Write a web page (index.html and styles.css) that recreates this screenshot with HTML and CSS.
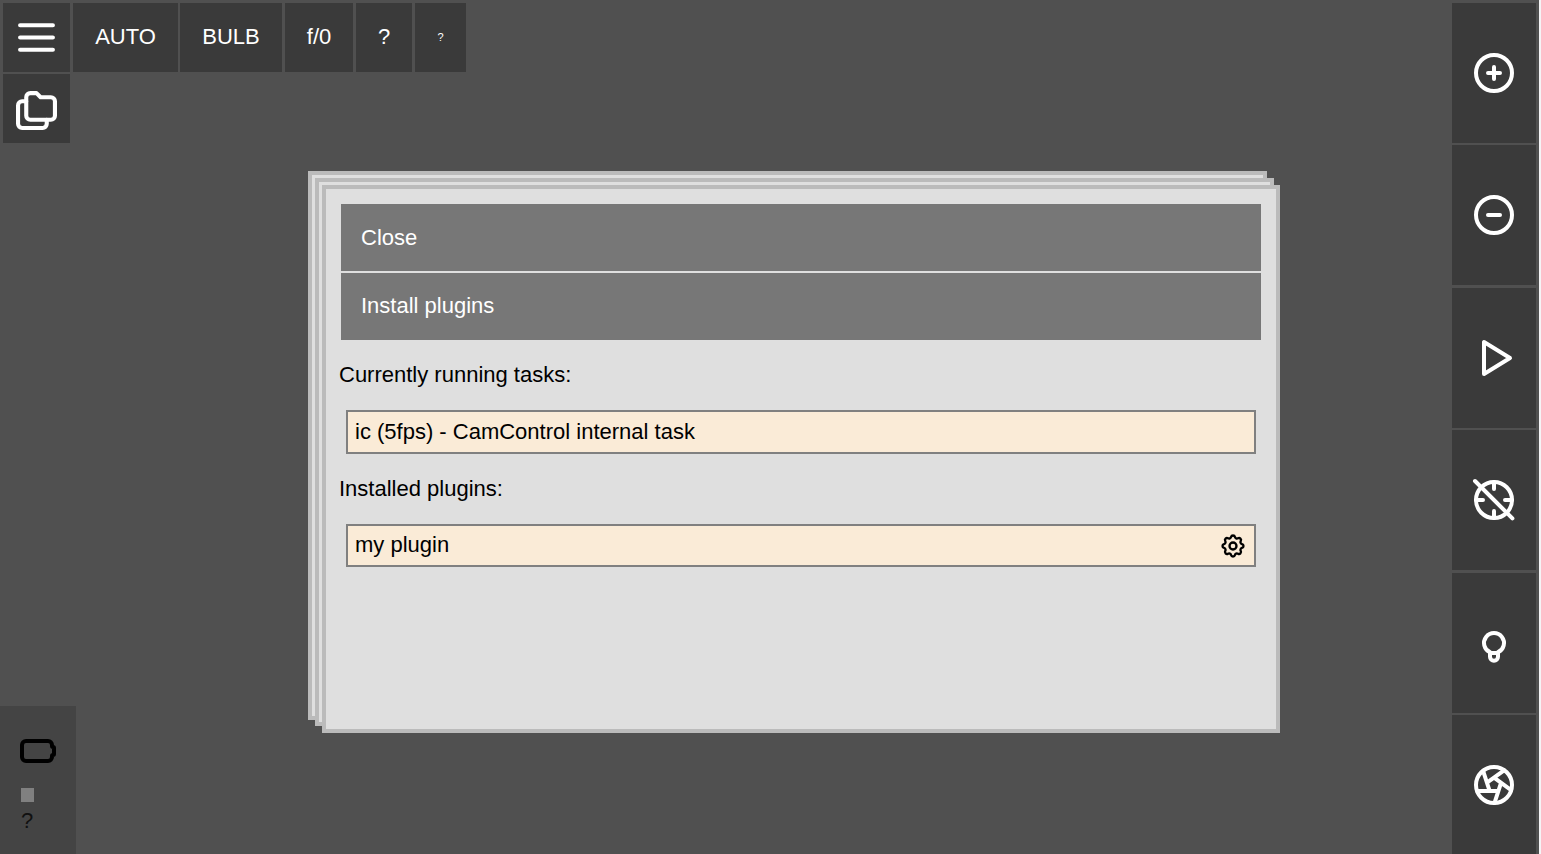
FILE: index.html
```html
<!DOCTYPE html>
<html lang="en">
<head>
  <meta charset="UTF-8">
  <title>CamControl</title>
  <link rel="stylesheet" href="styles.css">
</head>
<body>
  <div class="main">
    <div class="toolbar">
      <button class="tool-btn menu-btn">
        <svg class="icon burger" viewBox="2 2 20 20"><path d="M4 6h16M4 12h16M4 18h16"/></svg>
      </button>
      <button class="tool-btn auto-btn">AUTO</button>
      <button class="tool-btn bulb-btn">BULB</button>
      <button class="tool-btn fnum-btn">f/0</button>
      <button class="tool-btn iso-btn">?</button>
      <button class="tool-btn small-btn">?</button>
    </div>
    <button class="tool-btn menu-btn folder-btn">
      <svg class="icon folders" viewBox="2 2 20 20">
        <path d="M9 4h3l2 2h5a2 2 0 0 1 2 2v7a2 2 0 0 1-2 2H9a2 2 0 0 1-2-2V6a2 2 0 0 1 2-2"/>
        <path d="M17 17v2a2 2 0 0 1-2 2H5a2 2 0 0 1-2-2v-9a2 2 0 0 1 2-2h2"/>
      </svg>
    </button>

    <div class="status">
      <svg class="battery" viewBox="3 6 18 12"><path d="M6 7h11a2 2 0 0 1 2 2v.5a.5 .5 0 0 0 .5 .5a.5 .5 0 0 1 .5 .5v3a.5 .5 0 0 1-.5 .5a.5 .5 0 0 0-.5 .5v.5a2 2 0 0 1-2 2H6a2 2 0 0 1-2-2V9a2 2 0 0 1 2-2"/></svg>
      <div class="led"></div>
      <div class="status-text">?</div>
    </div>
  </div>

  <div class="side">
    <button class="side-btn">
      <svg class="icon" viewBox="2 2 20 20"><circle cx="12" cy="12" r="9"/><path d="M9 12h6M12 9v6"/></svg>
    </button>
    <button class="side-btn">
      <svg class="icon" viewBox="2 2 20 20"><circle cx="12" cy="12" r="9"/><path d="M9 12h6"/></svg>
    </button>
    <button class="side-btn">
      <svg class="icon" viewBox="2 2 20 20"><path d="M7 4v16l13-8z"/></svg>
    </button>
    <button class="side-btn">
      <svg class="icon" viewBox="2 2 20 20"><circle cx="12" cy="12" r="9"/><path d="M12 3v3.500M12 17.500V21M3 12h3.500M17.500 12H21M2.500 2.500l18.700 18.700"/></svg>
    </button>
    <button class="side-btn">
      <svg class="icon" viewBox="2 2 20 20"><path d="M10 16.600a5 5 0 1 1 4 0v2.250a2 2 0 0 1-4 0z"/><path d="M10 17h4"/></svg>
    </button>
    <button class="side-btn">
      <svg class="icon" viewBox="2 2 20 20"><circle cx="12" cy="12" r="9"/><path d="M3.600 15h10.550M6.551 4.938l3.260 10.034M17.032 4.636l-8.535 6.201M20.559 14.510l-8.535-6.201M12.257 20.916l3.261-10.034"/></svg>
    </button>
  </div>
  <div class="edge"></div>

  <div class="window window-back"></div>
  <div class="window window-mid"></div>
  <div class="window window-front">
    <button class="menu-item">Close</button>
    <button class="menu-item">Install plugins</button>
    <div class="section-label">Currently running tasks:</div>
    <div class="row row-task">ic (5fps) - CamControl internal task</div>
    <div class="section-label">Installed plugins:</div>
    <div class="row row-plugin">
      my plugin
      <svg class="gear" viewBox="0 0 24 24">
        <circle cx="12" cy="12" r="3"/>
        <path d="M10.325 4.317c.426-1.756 2.924-1.756 3.350 0a1.724 1.724 0 0 0 2.573 1.066c1.543-.94 3.310 .826 2.370 2.370a1.724 1.724 0 0 0 1.065 2.572c1.756 .426 1.756 2.924 0 3.350a1.724 1.724 0 0 0-1.066 2.573c.94 1.543-.826 3.310-2.370 2.370a1.724 1.724 0 0 0-2.572 1.065c-.426 1.756-2.924 1.756-3.350 0a1.724 1.724 0 0 0-2.573-1.066c-1.543 .94-3.310-.826-2.370-2.370a1.724 1.724 0 0 0-1.065-2.572c-1.756-.426-1.756-2.924 0-3.350a1.724 1.724 0 0 0 1.066-2.573c-.94-1.543 .826-3.310 2.370-2.370c1 .608 2.296 .07 2.572-1.065z"/>
      </svg>
    </div>
  </div>
</body>
</html>
```

FILE: styles.css
```css
* {
  box-sizing: border-box;
}
html, body {
  height: 100%;
}
body {
  margin: 0;
  display: flex;
  overflow: hidden;
  background: #505050;
  font-family: "Liberation Sans", Arial, sans-serif;
}
button {
  font-family: inherit;
  border: none;
  padding: 0;
  color: white;
  cursor: pointer;
}
.icon {
  fill: none;
  stroke: white;
  stroke-width: 2;
  stroke-linecap: round;
  stroke-linejoin: round;
  overflow: visible;
}

.main {
  flex: 1;
  display: flex;
  flex-direction: column;
  align-items: flex-start;
}
.toolbar {
  display: flex;
  gap: 3px;
  margin: 3px 0 2px 3px;
}
.tool-btn {
  height: 69px;
  padding-bottom: 2px;
  background: #3a3a3a;
  font-size: 22px;
}
.menu-btn {
  width: 67px;
  padding-bottom: 0;
  display: flex;
  align-items: center;
  justify-content: center;
}
.menu-btn .icon {
  width: 41px;
  height: 41px;
}
.burger {
  margin-top: -1px;
}
.folders {
  margin-top: 1px;
}
.folder-btn {
  margin-left: 3px;
}
.auto-btn {
  width: 105px;
  margin-right: -1px;
}
.bulb-btn { width: 102px; }
.fnum-btn { width: 68px; }
.iso-btn { width: 56px; }
.small-btn {
  width: 51px;
  font-size: 11px;
}

.status {
  margin-top: auto;
  width: 76px;
  height: 148px;
  padding: 33px 0 0 20px;
  background: #444;
}
.battery {
  display: block;
  width: 36px;
  height: 24px;
  fill: none;
  stroke: black;
  stroke-width: 2;
  stroke-linecap: round;
  stroke-linejoin: round;
  overflow: visible;
}
.led {
  width: 13px;
  height: 14px;
  margin: 25px 0 0 1px;
  background: #808080;
}
.status-text {
  margin-top: 6px;
  padding-left: 1px;
  font-size: 22px;
  color: #111;
}

.side {
  width: 84px;
  margin: 3px 5px 0 0;
  display: flex;
  flex-direction: column;
  gap: 2.400px;
  flex-shrink: 0;
}
.side-btn {
  height: 140px;
  flex-shrink: 0;
  background: #3a3a3a;
  display: flex;
  align-items: center;
  justify-content: center;
}
.side-btn .icon {
  width: 40px;
  height: 40px;
}
.edge {
  position: absolute;
  top: 0;
  right: 0;
  bottom: 0;
  width: 2px;
  background: #f4f4f6;
}

.window {
  position: absolute;
  background: #dfdfdf;
  border: 4px solid #bbb;
}
.window-back {
  left: 308px;
  top: 171px;
  width: 959px;
  height: 549px;
}
.window-mid {
  left: 315px;
  top: 178px;
  width: 959px;
  height: 548px;
}
.window-front {
  left: 322px;
  top: 185px;
  width: 958px;
  height: 548px;
  padding: 15px;
}
.menu-item {
  display: block;
  width: 920px;
  height: 67px;
  padding-left: 20px;
  background: #777;
  font-size: 22px;
  text-align: left;
}
.menu-item + .menu-item {
  border-top: 2px solid #dfdfdf;
  height: 69px;
  padding-bottom: 2px;
}
.section-label {
  margin: 22px 0 0 -2px;
  font-size: 22px;
  line-height: 26px;
  color: black;
}
.row {
  display: flex;
  align-items: center;
  justify-content: space-between;
  width: 910px;
  margin: 22px 0 0 5px;
  padding: 0 7px;
  background: #faebd7;
  border: 2px solid #808080;
  font-size: 22px;
  color: black;
}
.row-task {
  height: 44px;
  padding-bottom: 1px;
}
.row-plugin {
  height: 43px;
  padding-bottom: 2px;
}
.gear {
  width: 28px;
  height: 28px;
  margin-top: 2px;
  fill: none;
  stroke: black;
  stroke-width: 2;
  stroke-linecap: round;
  stroke-linejoin: round;
}
```
